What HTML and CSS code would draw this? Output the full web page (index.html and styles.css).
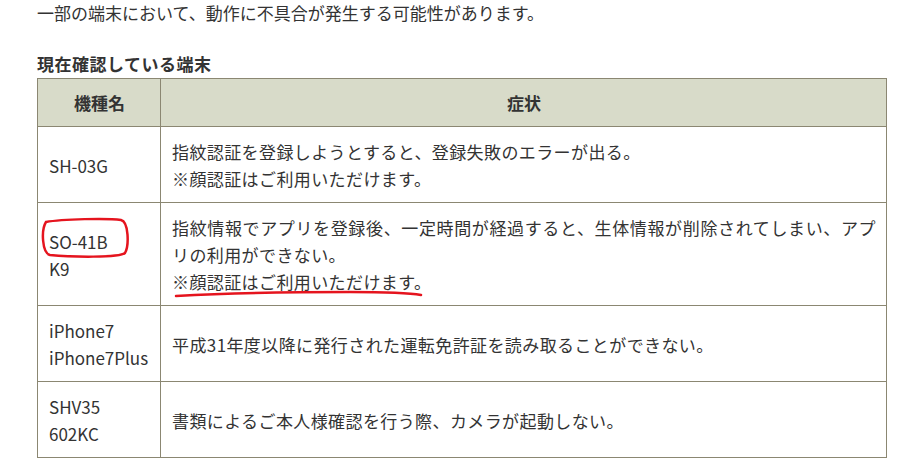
FILE: index.html
```html
<!DOCTYPE html>
<html lang="ja">
<head>
  <meta charset="UTF-8" />
  <title>現在確認している端末</title>
  <link rel="stylesheet" href="styles.css">
</head>
<body>
  <div class="pagina">
    <p class="aviso">一部の端末において、動作に不具合が発生する可能性があります。</p>

    <h3 class="titulo">現在確認している端末</h3>

    <table class="tabla-terminales">
      <thead>
        <tr>
          <th class="col-modelo">機種名</th>
          <th>症状</th>
        </tr>
      </thead>
      <tbody>
        <tr>
          <td>SH-03G</td>
          <td>指紋認証を登録しようとすると、登録失敗のエラーが出る。<br>※顔認証はご利用いただけます。</td>
        </tr>
        <tr>
          <td>SO-41B<br>K9</td>
          <td>指紋情報でアプリを登録後、一定時間が経過すると、生体情報が削除されてしまい、アプリの利用ができない。<br>※顔認証はご利用いただけます。</td>
        </tr>
        <tr>
          <td>iPhone7<br>iPhone7Plus</td>
          <td>平成31年度以降に発行された運転免許証を読み取ることができない。</td>
        </tr>
        <tr>
          <td>SHV35<br>602KC</td>
          <td>書類によるご本人様確認を行う際、カメラが起動しない。</td>
        </tr>
      </tbody>
    </table>

    <!-- marcas rojas a mano encima de la captura -->
    <svg class="marcas" width="898" height="472" viewBox="0 0 898 472">
      <path d="M46 222 C62 219 108 218 121 220 C129 222 129 246 125 253 C120 258 70 257 50 255 C42 253 41 230 46 222 Z" />
      <path d="M176 296 C230 293 300 292 350 292 C390 292 410 293 421 295" />
    </svg>
  </div>
</body>
</html>
```

FILE: styles.css
```css
:root {
  --color-texto: #333;
  --color-borde: #8b8772;
  --color-cabecera: #d8dbc9;
  --color-marca: #e5141e;
}

* {
  margin: 0;
  padding: 0;
  box-sizing: border-box;
}

body {
  font-family: "Noto Sans CJK JP", "Noto Sans", sans-serif;
  font-size: 17px;
  color: var(--color-texto);
  background: #fff;
}

.pagina {
  position: relative;
  padding: 0 0 0 37px;
  width: 898px;
  height: 472px;
  overflow: hidden;
}

.aviso {
  line-height: 27px;
  margin-top: -1px;
}

.titulo {
  font-size: 17px;
  font-weight: bold;
  line-height: 27px;
  letter-spacing: 0.5px;
  margin-top: 24px;
  margin-bottom: 1px;
}

.tabla-terminales {
  border-collapse: collapse;
  table-layout: fixed;
  width: 850px;
  line-height: 27px;
}

.tabla-terminales th,
.tabla-terminales td {
  border: 1px solid var(--color-borde);
  padding: 11px 10px 10px 11px;
  vertical-align: middle;
}

.tabla-terminales th {
  background: var(--color-cabecera);
  font-weight: bold;
  text-align: center;
  padding-top: 10px;
}

.tabla-terminales td + td {
  text-align: justify;
  letter-spacing: 0.4px;
}

.tabla-terminales .col-modelo {
  width: 123px;
}

.marcas {
  position: absolute;
  top: 0;
  left: 0;
  pointer-events: none;
}

.marcas path {
  fill: none;
  stroke: var(--color-marca);
  stroke-width: 2.5;
  stroke-linecap: round;
}
```
